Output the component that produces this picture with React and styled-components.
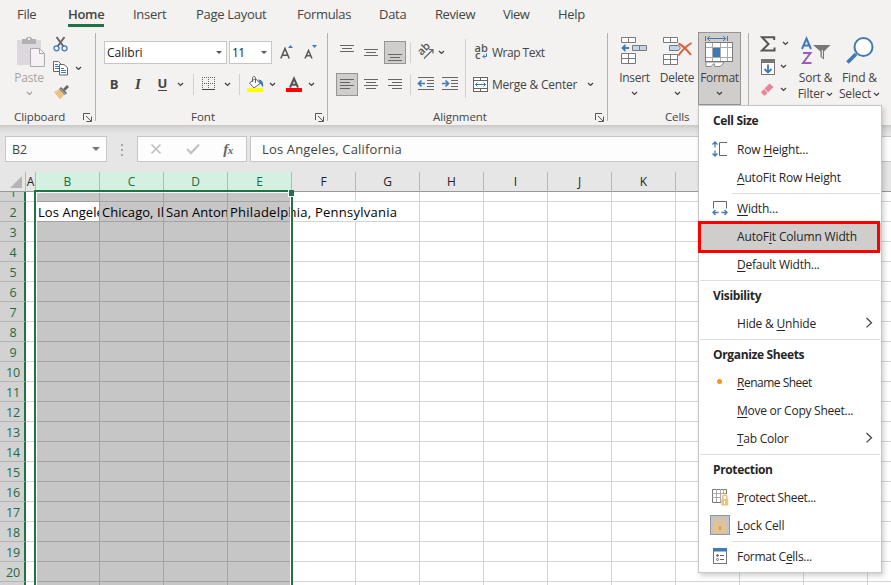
import styled, { createGlobalStyle, css } from "styled-components";

const GlobalStyle = createGlobalStyle`
  * {
    box-sizing: border-box;
  }

  body {
    margin: 0;
    overflow: hidden;
    background: #e6e6e6;
    color: #444;
    font-family: "Open Sans", "Noto Sans", sans-serif;
    font-size: 12px;
  }

  svg {
    display: block;
    flex: none;
    overflow: visible;
  }
`;

const Window = styled.div`
  position: relative;
  display: flex;
  flex-direction: column;
  width: 891px;
  height: 585px;
  overflow: hidden;
`;

/* ---------- tabs ---------- */

const TabBar = styled.nav`
  display: flex;
  height: 30px;
  padding-left: 17px;
  background: #f3f2f1;
`;

const TabItem = styled.div`
  width: ${(props) => props.$w}px;
  font-size: 13px;
  line-height: 29px;
  letter-spacing: ${(props) => props.$ls || -0.3}px;
  white-space: nowrap;
  font-weight: ${(props) => (props.$active ? 600 : 400)};
`;

const TabText = styled.span`
  display: inline-block;
  height: 27px;
  border-bottom: ${(props) => (props.$active ? "3px solid #217346" : "none")};
`;

/* ---------- ribbon ---------- */

const Ribbon = styled.div`
  display: flex;
  height: 95px;
  background: #f3f2f1;
`;

const Group = styled.section`
  display: flex;
  flex-direction: column;
  width: ${(props) => props.$w}px;
  height: 95px;
`;

const GroupBody = styled.div`
  display: flex;
  height: 77px;
  padding-left: ${(props) => props.$pl || 0}px;
`;

const GroupFooter = styled.div`
  display: flex;
  align-items: center;
  height: 18px;
  padding: 2px 3px 0 ${(props) => props.$pl}px;
  line-height: 16px;
  letter-spacing: ${(props) => props.$ls || 0}px;
  font-size: 11.5px;

  svg {
    margin: 0 0 0 auto;
  }
`;

const GroupLine = styled.div`
  width: 1px;
  height: 88px;
  margin-top: 3px;
  background: #b3b1b0;
`;

const Column = styled.div`
  display: flex;
  flex-direction: column;
  width: ${(props) => (props.$w ? `${props.$w}px` : "auto")};
  padding-top: ${(props) => props.$pt}px;
`;

const Row = styled.div`
  display: flex;
  align-items: center;
  height: ${(props) => props.$h}px;
  padding-left: ${(props) => props.$pl || 0}px;
`;

const Slot = styled.div`
  display: flex;
  align-items: center;
  justify-content: center;
  flex: none;
  width: ${(props) => props.$w}px;
  margin-left: ${(props) => props.$ml || 0}px;
`;

const Divider = styled.div`
  flex: none;
  width: 1px;
  height: ${(props) => props.$h || 21}px;
  margin: ${(props) => props.$m || "0"};
  background: #d2d0ce;
`;

const Letter = styled.span`
  color: #444;
  font-size: 13px;
  line-height: 16px;
  font-weight: 700;
  ${(props) =>
    props.$italic &&
    css`
      font-family: "Liberation Serif", serif;
      font-style: italic;
      font-size: 15px;
    `}
  ${(props) =>
    props.$underline &&
    css`
      height: 14px;
      line-height: 13px;
      border-bottom: 1px solid #444;
    `}
`;

const ComboBox = styled.div`
  display: flex;
  align-items: center;
  justify-content: space-between;
  width: ${(props) => props.$w}px;
  height: 23px;
  padding: 0 4px 0 2px;
  margin-right: 2px;
  border: 1px solid #c8c6c4;
  background: #fff;
  color: #222;
  letter-spacing: ${(props) => props.$ls || 0}px;
`;

const AlignButton = styled.div`
  display: flex;
  align-items: center;
  justify-content: center;
  width: 22px;
  height: 23px;
  margin-right: 2px;
  border: 1px solid ${(props) => (props.$on ? "#979593" : "transparent")};
  background: ${(props) => (props.$on ? "#d0cecc" : "transparent")};
`;

const ToolText = styled.span`
  margin-left: ${(props) => props.$ml}px;
  letter-spacing: ${(props) => props.$ls}px;
  white-space: nowrap;
`;

const BigButton = styled.div`
  display: flex;
  flex-direction: column;
  align-items: center;
  width: ${(props) => props.$w}px;
  height: 73px;
  margin-top: 2px;
  padding-top: ${(props) => (props.$on ? 3 : 4)}px;
  border: ${(props) => (props.$on ? "1px solid #979593" : "none")};
  background: ${(props) => (props.$on ? "#d0cecc" : "transparent")};
  color: ${(props) => (props.$off ? "#a6a4a2" : "#444")};
  letter-spacing: ${(props) => props.$ls || 0}px;
`;

const BigIcon = styled.div`
  height: 34px;
`;

const BigText = styled.div`
  display: flex;
  align-items: center;
  gap: 2px;
  height: 16px;
  line-height: 16px;
  white-space: nowrap;
`;

const BigChevron = styled(BigText)`
  height: 15px;
`;

/* ---------- formula bar ---------- */

const FormulaBar = styled.div`
  display: flex;
  height: 47px;
  padding: 11px 0 0 5px;
  background: linear-gradient(#c9c8c7 0, #dcdcdc 4px, #e6e6e6 9px);
`;

const NameBox = styled.div`
  display: flex;
  align-items: center;
  justify-content: space-between;
  width: 102px;
  height: 26px;
  padding: 0 6px;
  border: 1px solid #c6c6c6;
  background: #fdfdfd;
  font-size: 12.5px;
`;

const Dots = styled.div`
  display: flex;
  flex-direction: column;
  align-items: center;
  gap: 3px;
  width: 30px;
  padding-top: 8px;

  i {
    width: 2px;
    height: 2px;
    background: #a6a6a6;
  }
`;

const FormulaTools = styled.div`
  display: flex;
  align-items: center;
  width: 110px;
  height: 26px;
  padding-left: 12px;
  border: 1px solid #c6c6c6;
  background: #fdfdfd;
`;

const FormulaInput = styled.div`
  flex: 1;
  height: 26px;
  margin-left: 3px;
  padding-left: 11px;
  border: 1px solid #c6c6c6;
  border-right: none;
  background: #fdfdfd;
  font-size: 13px;
  line-height: 25px;
  letter-spacing: 0.16px;
`;

/* ---------- sheet ---------- */

const Sheet = styled.div`
  position: relative;
  height: 413px;
  overflow: hidden;
  background: #fff;
`;

const SheetRow = styled.div`
  display: grid;
  grid-template-columns: 26px 10px repeat(14, 64px);
  grid-template-rows: 100%;
  height: ${(props) => props.$h}px;
`;

const Corner = styled.div`
  display: flex;
  justify-content: flex-end;
  align-items: flex-end;
  padding: 0 3px 3px 0;
  border-right: 1px solid #b8b8b8;
  border-bottom: 1px solid #999;
  background: #e6e6e6;
`;

const ColumnHeader = styled.div`
  display: flex;
  justify-content: center;
  border-right: 1px solid #b8b8b8;
  border-bottom: 1px solid #999;
  background: ${(props) => (props.$on ? "#d3f0e0" : "#e6e6e6")};
  color: ${(props) => (props.$on ? "#1e6b44" : "#222")};
  line-height: 20px;
`;

const RowHeader = styled.div`
  display: flex;
  align-items: flex-end;
  justify-content: center;
  overflow: hidden;
  padding-left: 2px;
  border-right: 2px solid #217346;
  border-bottom: 1px solid #b4b4b4;
  background: #d2d2d2;
  color: #1e6b44;
  font-size: 12.5px;
  line-height: 16px;
  letter-spacing: -0.2px;
`;

const Cell = styled.div`
  position: relative;
  z-index: ${(props) => (props.$spill ? 1 : 0)};
  overflow: ${(props) => (props.$spill ? "visible" : "hidden")};
  padding-left: 2px;
  border-right: 1px solid ${(props) => (props.$selected ? "#a3a3a3" : "#d4d4d4")};
  border-bottom: 1px solid ${(props) => (props.$selected ? "#a3a3a3" : "#d4d4d4")};
  background: ${(props) => (props.$selected && !props.$current ? "#c6c6c6" : "#fff")};
  color: #000;
  font-size: 13px;
  line-height: 20px;
  letter-spacing: ${(props) => (props.$spill ? 0.26 : 0.05)}px;
  white-space: nowrap;
  ${(props) => props.$open && "border-right-color: #fff;"}
`;

const Selection = styled.div`
  position: absolute;
  z-index: 2;
  left: 34px;
  top: 18px;
  width: 259px;
  height: 420px;
  border: 2px solid #217346;
  box-shadow: inset 0 0 0 1px #fff;
`;

const Handle = styled.div`
  position: absolute;
  z-index: 2;
  left: 288px;
  top: 18px;
  width: 6px;
  height: 7px;
  border: 1px solid #fff;
  border-width: 0 0 1px 1px;
  background: #217346;
`;

/* ---------- format menu ---------- */

const Menu = styled.div`
  position: absolute;
  z-index: 5;
  left: 698px;
  top: 105px;
  width: 184px;
  height: 468px;
  border: 1px solid #c6c6c6;
  background: #fff;
  box-shadow: 2px 3px 5px rgba(0, 0, 0, 0.18);
  color: #262626;
`;

const MenuTitle = styled.div`
  height: ${(props) => (props.$first ? 30 : 28)}px;
  padding-left: 14px;
  line-height: ${(props) => (props.$first ? 30 : 27)}px;
  font-weight: 700;
  letter-spacing: -0.35px;
`;

const MenuItem = styled.div`
  position: relative;
  display: flex;
  align-items: center;
  height: 28px;
  padding: 0 8px 2px 0;
  background: ${(props) => (props.$on ? "#d0cecc" : "transparent")};
  letter-spacing: ${(props) => props.$ls}px;
  white-space: pre;

  u {
    text-underline-offset: 2px;
    text-decoration-thickness: 1px;
  }
`;

const MenuIcon = styled.div`
  display: flex;
  align-items: center;
  justify-content: center;
  width: 20px;
  height: 20px;
  margin: 0 7px 0 11px;
`;

const LockTile = styled(MenuIcon)`
  border: 1px solid #979593;
  background: #c6c4c2;
`;

const MenuLine = styled.div`
  height: 1px;
  margin: 1px 1px 1px ${(props) => (props.$inset ? 33 : 1)}px;
  background: #e1dfdd;
`;

const SubmenuArrow = styled.div`
  margin-left: auto;
`;

const RedFrame = styled.div`
  position: absolute;
  left: -1px;
  top: -2px;
  width: 182px;
  height: 32px;
  border: 3px solid #fc0000;
`;

/* ---------- icons ---------- */

const Chevron = ({ color = "#444" }) => (
  <svg width="7" height="5" viewBox="0 0 7 5">
    <path d="M1 1l2.5 2.4L6 1" fill="none" stroke={color} strokeWidth="1.3" />
  </svg>
);

const Triangle = ({ size = 6, color = "#555" }) => (
  <svg width={size} height={size / 2} viewBox="0 0 6 3">
    <path d="M0 0h6L3 3z" fill={color} />
  </svg>
);

const Launcher = () => (
  <svg width="9" height="9" viewBox="0 0 9 9" fill="none" stroke="#555">
    <path d="M0.5 7V0.5H7M3 3l5 5M8.5 3.5v5h-5" />
  </svg>
);

const PasteIcon = () => (
  <svg width="34" height="32" viewBox="-4 0 34 32">
    <rect x="1" y="4" width="24" height="25" rx="1" fill="#dcd8dc" />
    <path d="M6 3h4c0-3 6-3 6 0h4v5H6z" fill="#b3b0b3" />
    <rect x="12" y="2" width="2" height="2" fill="#f3f2f1" />
    <path d="M14.5 12.5h9l5 5v13h-14z" fill="#f7f1f7" stroke="#aaa" />
    <path d="M23.5 12.5v5h5" fill="none" stroke="#aaa" />
  </svg>
);

const CutIcon = () => (
  <svg width="16" height="16" viewBox="0 0 16 16" fill="none">
    <path d="M3.5 1l7 9.5M11.5 1l-7 9.5" stroke="#666" strokeWidth="2" />
    <circle cx="3.5" cy="12.3" r="2.5" stroke="#3f7ab5" strokeWidth="1.3" />
    <circle cx="11.5" cy="12.3" r="2.5" stroke="#3f7ab5" strokeWidth="1.3" />
  </svg>
);

const CopyIcon = () => (
  <svg width="16" height="15" viewBox="0 0 16 15" fill="#fff" stroke="#666">
    <path d="M0.5 0.5h5l3 3v7h-8z" />
    <path d="M2 3.5h3M2 5.5h4M2 7.5h4" stroke="#3f7ab5" />
    <path d="M6.5 3.5h4.5l3.5 3v7.5h-8z" />
    <path d="M8 7.5h3M8 9.5h5M8 11.5h5" stroke="#3f7ab5" />
  </svg>
);

const BrushIcon = () => (
  <svg width="17" height="15" viewBox="0 0 17 15">
    <path d="M1 7l6-3 5 5-5 5.5z" fill="#eac282" />
    <path d="M6 4l2-2 6 6-2 2z" fill="#666" />
    <path d="M10 4l4-4 2 2-4 4z" fill="#666" />
    <path d="M7 3.5l6 6" stroke="#f3f2f1" strokeWidth="0.7" />
  </svg>
);

const GrowFontIcon = ({ shrink }) => (
  <svg width="15" height="17" viewBox="0 0 15 17">
    <path
      d={shrink ? "M1 14.5L4.5 6.5 8 14.5M2.2 11.8h4.6" : "M0.8 14.5L5 4.5l4.2 10M2.3 11.3h5.4"}
      fill="none"
      stroke="#555"
      strokeWidth="1.5"
    />
    <path d={shrink ? "M8 1h5l-2.5 3z" : "M8 4h5l-2.5-3z"} fill="#3f7ab5" />
  </svg>
);

const BordersIcon = () => (
  <svg width="14" height="14" viewBox="0 0 14 14" stroke="#666">
    <path
      d="M0 0.5h13M0 6.5h13M0.5 0v12M6.5 0v12M12.5 0v12"
      strokeDasharray="1 1"
      fill="none"
    />
    <path d="M0 12.5h13" stroke="#444" />
  </svg>
);

const FillColorIcon = () => (
  <svg width="17" height="17" viewBox="0 0 17 17">
    <path d="M2.5 7l6-4.5 4.5 5L7 12z" fill="#fff" stroke="#666" />
    <path d="M5.5 6V2c0-2 3-2 3 0v5" fill="none" stroke="#666" />
    <path d="M11 3.5c4 0 6 3 5 8-1-2-2-3-3-4z" fill="#3f7ab5" />
    <rect y="12" width="16" height="4" fill="#ff0" />
  </svg>
);

const FontColorIcon = () => (
  <svg width="16" height="17" viewBox="0 0 16 17">
    <path d="M4 11.5L8 2.5l4 9M5.3 8.8h5.4" fill="none" stroke="#555" strokeWidth="2" />
    <rect y="12" width="16" height="4" fill="red" />
  </svg>
);

const verticalOffset = { top: 3, middle: 7, bottom: 12 };

const VAlignIcon = ({ at }) => {
  const y = verticalOffset[at] + 0.5;
  return (
    <svg width="14" height="19" viewBox="0 0 14 19" stroke="#666">
      <path d={`M0 ${y - 1}h14M2 ${y + 2}h10M0 ${y + 5}h14`} />
    </svg>
  );
};

const HAlignIcon = ({ side }) => {
  const x = { left: 0, center: 2, right: 4 }[side];
  return (
    <svg width="14" height="11" viewBox="0 0 14 11" stroke="#666">
      <path d={`M0 0.5h14M${x} 3.5h10M0 6.5h14M${x} 9.5h10`} />
    </svg>
  );
};

const IconText = styled.text`
  font: 600 11px "Open Sans", sans-serif;
  fill: #555;
`;

const OrientationIcon = () => (
  <svg width="16" height="16" viewBox="0 0 16 16">
    <IconText transform="translate(3.5 12) rotate(-45)">ab</IconText>
    <path d="M6 14.5l9-9M11 5.5h4v4" fill="none" stroke="#666" strokeWidth="1.2" />
  </svg>
);

const IndentIcon = ({ right }) => (
  <svg width="16" height="14" viewBox="0 0 16 14" fill="none">
    <path d="M0 0.5h16M9 3.5h7M9 6.5h7M9 9.5h7M0 12.5h16" stroke="#666" />
    <path
      d={right ? "M0 6.5h6M3.5 3.5l3 3-3 3" : "M1 6.5h6M3.5 3.5l-3 3 3 3"}
      stroke="#3f7ab5"
      strokeWidth="1.7"
    />
  </svg>
);

const WrapIcon = () => (
  <svg width="13" height="16" viewBox="0 0 13 16">
    <IconText x="-0.5" y="8">ab</IconText>
    <IconText x="0" y="15">c</IconText>
    <path d="M11.5 9.5v3H8M9.8 10.5L7.8 12.5l2 2" fill="none" stroke="#3f7ab5" />
  </svg>
);

const MergeIcon = () => (
  <svg width="15" height="15" viewBox="0 0 15 15" fill="none" stroke="#666">
    <rect x="0.5" y="0.5" width="14" height="14" fill="#fff" />
    <path d="M0 3.5h15M0 11.5h15M7.5 0v3M7.5 12v3" />
    <path d="M2 7.5h11M4.5 5.5l-2 2 2 2M10.5 5.5l2 2-2 2" stroke="#3f7ab5" />
  </svg>
);

const InsertCellsIcon = () => (
  <svg width="27" height="28" viewBox="0 0 27 28" fill="#fff" stroke="#7a7a7a">
    <path d="M0.5 1.5h14v5h-14zM7.5 1.5v5" />
    <path d="M0.5 17.5h14v10h-14zM7.5 17.5v10M0.5 22.5h14" />
    <path d="M11.5 9.5h14v5h-14zM18.5 9.5v5" fill="#c0d4ea" />
    <path d="M1.5 12h6.5M4.5 9l-3 3 3 3" fill="none" stroke="#3f7ab5" strokeWidth="1.8" />
  </svg>
);

const DeleteCellsIcon = () => (
  <svg width="29" height="29" viewBox="0 0 29 29" fill="#fff" stroke="#7a7a7a">
    <path d="M0.5 1.5h14v5h-14zM7.5 1.5v5" />
    <path d="M0.5 18.5h14v10h-14zM7.5 18.5v10M0.5 23.5h14" />
    <path d="M6.5 9.5h9l2 2.5-2 2.5h-9z" fill="#c0d4ea" />
    <path
      d="M15.5 7.5c5 2.5 9 7 12.5 11.5M28.5 7c-5 3-9.5 7-13 12.5"
      fill="none"
      stroke="#db5f3c"
      strokeWidth="2"
    />
  </svg>
);

const FormatCellsIcon = () => (
  <svg width="29" height="32" viewBox="0 0 29 32" fill="none" stroke="#7a7a7a">
    <path d="M1 26v4.5h5l3-3 1 3h5l3-2.5 1-2z" fill="#fff" stroke="#888" />
    <rect x="0.5" y="6.5" width="27" height="19" fill="#fff" />
    <path d="M1 11.5h26M1 21.5h26M7.5 7v18M15.5 7v18M22.5 7v18" stroke="#aaa" />
    <rect x="8" y="12" width="7" height="9" fill="#3f7ab5" stroke="none" />
    <path d="M0.5 0v5M22.5 0v5M2 2.5h19M5 0L2.2 2.5 5 5M18 0l2.8 2.5L18 5" stroke="#3f7ab5" />
  </svg>
);

const SigmaIcon = () => (
  <svg width="16" height="16" viewBox="0 0 16 16">
    <path d="M14.2 4V1.2H2L8.5 8 2 14.5h12.5V11.5" fill="none" stroke="#555" strokeWidth="2" />
  </svg>
);

const FillDownIcon = () => (
  <svg width="15" height="16" viewBox="0 0 15 16" fill="none">
    <rect x="0.5" y="0.5" width="13" height="15" fill="#fff" stroke="#777" />
    <rect width="14" height="4" fill="#777" />
    <path d="M7 5.5v8M3.5 10L7 13.5 10.5 10" stroke="#3f7ab5" strokeWidth="1.8" />
  </svg>
);

const EraserIcon = () => (
  <svg width="14" height="13" viewBox="0 0 14 13">
    <path d="M8.5 0.5L12.5 4 7 9.5 3.5 5.5z" fill="#e8849a" />
    <path d="M3 6l3.5 4L4 12.5H3L0.5 10V8.5z" fill="#e8849a" />
  </svg>
);

const SortIcon = () => (
  <svg width="31" height="29" viewBox="-1 0 31 29" fill="none">
    <path d="M1 13L5.5 2.5 10 13M2.5 9.5h6" stroke="#3f7ab5" strokeWidth="2" />
    <path d="M2 17h7.5L2 27h8.5" stroke="#9a5fb5" strokeWidth="2" />
    <path d="M12 9h17.5L23 15.5v8L19.5 21v-5.5z" fill="#777" />
    <path d="M20.8 14v7l1 .8V14z" fill="#fff" />
  </svg>
);

const FindIcon = () => (
  <svg width="28" height="29" viewBox="0 0 28 29">
    <path d="M1.5 26.5L10 18" stroke="#3f7ab5" strokeWidth="3.8" />
    <circle cx="17.5" cy="11" r="9" fill="#fff" stroke="#3f7ab5" strokeWidth="2" />
  </svg>
);

const FxText = styled.span`
  font: italic 700 15px "Liberation Serif", serif;
  letter-spacing: -0.5px;
  color: #666;

  small {
    font-size: 11px;
  }
`;

const RowHeightIcon = () => (
  <svg width="16" height="16" viewBox="0 0 16 16" fill="none">
    <path
      d="M3 1v5.5M3 9.5V15M0.5 3.5L3 1l2.5 2.5M0.5 12.5L3 15l2.5-2.5"
      stroke="#3f7ab5"
      strokeWidth="1.3"
    />
    <path d="M15 1.5H7.5v13H15" stroke="#666" />
  </svg>
);

const WidthIcon = () => (
  <svg width="16" height="16" viewBox="0 0 16 16" fill="none">
    <path d="M1.5 8.5v-7h13v7" stroke="#666" />
    <path
      d="M1 12.5h5.5M9.5 12.5H15M3.5 10L1 12.5 3.5 15M12.5 10l2.5 2.5-2.5 2.5"
      stroke="#3f7ab5"
      strokeWidth="1.3"
    />
  </svg>
);

const DotIcon = () => (
  <svg width="6" height="6" viewBox="0 0 6 6">
    <circle cx="2.5" cy="2.5" r="2.5" fill="#fb9410" />
  </svg>
);

const ProtectIcon = () => (
  <svg width="17" height="17" viewBox="0 0 17 17" fill="none">
    <path d="M0.5 0.5h14v13h-14z" fill="#fff" stroke="#777" />
    <path d="M0 4.5h14M0 8.5h14M4.5 0v13M8.5 0v13M11.5 0v13" stroke="#aaa" />
    <rect x="9" y="5" width="8" height="12" fill="#fff" />
    <path d="M10.8 10V8c0-2.6 4-2.6 4 0v2" stroke="#eac282" strokeWidth="1.5" />
    <rect x="9.3" y="10" width="7" height="6.5" fill="#eac282" />
    <path d="M12.5 12v3" stroke="#fff" />
  </svg>
);

const LockIcon = () => (
  <svg width="12" height="15" viewBox="0 0 12 15" fill="none">
    <path d="M2.5 7V4.5c0-4.5 7-4.5 7 0V7" stroke="#eac282" strokeWidth="2" />
    <rect y="6" width="12" height="8.5" fill="#eac282" />
    <path d="M6 8.5v3.5" stroke="#999" strokeWidth="1.5" />
  </svg>
);

const FormatDialogIcon = () => (
  <svg width="15" height="16" viewBox="0 0 15 16" fill="none">
    <rect x="0.5" y="0.5" width="13" height="15" fill="#fff" stroke="#777" />
    <rect width="14" height="3.5" fill="#3f7ab5" />
    <path d="M7 7.5h4M7 11.5h4" stroke="#666" />
    <circle cx="4.5" cy="7.5" r="1" fill="#666" stroke="#666" strokeWidth="0.7" />
    <circle cx="4.5" cy="11.5" r="1" stroke="#666" />
  </svg>
);

const ArrowRight = () => (
  <svg width="8" height="12" viewBox="0 0 8 12">
    <path d="M1.5 1l5 4.7-5 4.7" fill="none" stroke="#444" strokeWidth="1.3" />
  </svg>
);

/* ---------- data ---------- */

const tabs = [
  { name: "File", w: 51 },
  { name: "Home", w: 65, active: true },
  { name: "Insert", w: 63 },
  { name: "Page Layout", w: 101 },
  { name: "Formulas", w: 82 },
  { name: "Data", w: 56 },
  { name: "Review", w: 68, ls: -0.4 },
  { name: "View", w: 55, ls: -0.5 },
  { name: "Help", w: 60 },
];

// the columns after K stay unlabelled under the open menu
const columns = [..."ABCDEFGHIJK", "", "", "", ""];
const rows = Array.from({ length: 21 }, (_, i) => i + 1);
const selected = ["B", "C", "D", "E"];

const cities = {
  B: "Los Angeles, California",
  C: "Chicago, Illinois",
  D: "San Antonio, Texas",
  E: "Philadelphia, Pennsylvania",
};

// "_" stands before the access key letter
const menu = [
  { title: "Cell Size", first: true },
  { text: "Row _Height...", icon: <RowHeightIcon />, ls: -0.15 },
  { text: "_AutoFit Row Height", ls: -0.17 },
  { line: true, inset: true },
  { text: "_Width...", icon: <WidthIcon /> },
  { text: "AutoF_it Column Width", on: true, ls: -0.15 },
  { text: "_Default Width...", ls: -0.25 },
  { line: true },
  { title: "Visibility" },
  { text: "Hide & _Unhide", submenu: true },
  { line: true },
  { title: "Organize Sheets" },
  { text: "_Rename Sheet", icon: <DotIcon />, ls: -0.5 },
  { text: "_Move or Copy Sheet...", ls: -0.25 },
  { text: "_Tab Color", submenu: true, ls: -0.25 },
  { line: true },
  { title: "Protection" },
  { text: "_Protect Sheet...", icon: <ProtectIcon />, ls: -0.36 },
  { text: "_Lock Cell", icon: <LockIcon />, tile: true },
  { line: true, inset: true },
  { text: "Format C_ells...", icon: <FormatDialogIcon />, ls: -0.27 },
];

const AccessText = ({ text }) => {
  const [before, after] = text.split("_");
  return (
    <span>
      {before}
      <u>{after[0]}</u>
      {after.slice(1)}
    </span>
  );
};

const FormatMenu = () => (
  <Menu>
    {menu.map((item, i) => {
      if (item.line) return <MenuLine key={i} $inset={item.inset} />;
      if (item.title) {
        return (
          <MenuTitle key={i} $first={item.first}>
            {item.title}
          </MenuTitle>
        );
      }
      const IconBox = item.tile ? LockTile : MenuIcon;
      return (
        <MenuItem key={i} $on={item.on} $ls={item.ls ?? -0.2}>
          <IconBox>{item.icon}</IconBox>
          <AccessText text={item.text} />
          {item.submenu && (
            <SubmenuArrow>
              <ArrowRight />
            </SubmenuArrow>
          )}
          {item.on && <RedFrame />}
        </MenuItem>
      );
    })}
  </Menu>
);

const ClipboardGroup = () => (
  <Group $w={95}>
    <GroupBody $pl={6}>
      <BigButton $w={46} $off $ls={-0.2}>
        <BigIcon>
          <PasteIcon />
        </BigIcon>
        <BigText>Paste</BigText>
        <BigChevron>
          <Chevron color="#a6a4a2" />
        </BigChevron>
      </BigButton>
      <Column $pt={2}>
        <Row $h={24} $pl={1}>
          <CutIcon />
        </Row>
        <Row $h={24} $pl={1}>
          <CopyIcon />
          <Slot $w={18}>
            <Chevron />
          </Slot>
        </Row>
        <Row $h={24} $pl={1}>
          <BrushIcon />
        </Row>
      </Column>
    </GroupBody>
    <GroupFooter $pl={14} $ls={-0.1}>
      Clipboard
      <Launcher />
    </GroupFooter>
  </Group>
);

const FontGroup = () => (
  <Group $w={231}>
    <GroupBody>
      <Column $pt={6}>
        <Row $h={32} $pl={8}>
          <ComboBox $w={123}>
            Calibri
            <Triangle />
          </ComboBox>
          <ComboBox $w={43} $ls={-0.5}>
            11
            <Triangle />
          </ComboBox>
          <Slot $w={15} $ml={6}>
            <GrowFontIcon />
          </Slot>
          <Slot $w={15} $ml={9}>
            <GrowFontIcon shrink />
          </Slot>
        </Row>
        <Row $h={32} $pl={6}>
          <Slot $w={24}>
            <Letter>B</Letter>
          </Slot>
          <Slot $w={24}>
            <Letter $italic>I</Letter>
          </Slot>
          <Slot $w={25}>
            <Letter $underline>U</Letter>
          </Slot>
          <Slot $w={10}>
            <Chevron />
          </Slot>
          <Divider $m="0 8px" />
          <BordersIcon />
          <Slot $w={22}>
            <Chevron />
          </Slot>
          <Divider $m="0 7px 0 1px" />
          <FillColorIcon />
          <Slot $w={16}>
            <Chevron />
          </Slot>
          <Slot $w={16} $ml={6}>
            <FontColorIcon />
          </Slot>
          <Slot $w={18}>
            <Chevron />
          </Slot>
        </Row>
      </Column>
    </GroupBody>
    <GroupFooter $pl={95}>
      Font
      <Launcher />
    </GroupFooter>
  </Group>
);

const AlignmentGroup = () => (
  <Group $w={279}>
    <GroupBody $pl={8}>
      <Column $w={129} $pt={6}>
        <Row $h={32}>
          <AlignButton>
            <VAlignIcon at="top" />
          </AlignButton>
          <AlignButton>
            <VAlignIcon at="middle" />
          </AlignButton>
          <AlignButton $on>
            <VAlignIcon at="bottom" />
          </AlignButton>
          <Divider $m="0 7px 0 2px" />
          <OrientationIcon />
          <Slot $w={14}>
            <Chevron />
          </Slot>
        </Row>
        <Row $h={32}>
          <AlignButton $on>
            <HAlignIcon side="left" />
          </AlignButton>
          <AlignButton>
            <HAlignIcon side="center" />
          </AlignButton>
          <AlignButton>
            <HAlignIcon side="right" />
          </AlignButton>
          <Divider $m="0 7px 0 2px" />
          <IndentIcon />
          <Slot $w={16} $ml={8}>
            <IndentIcon right />
          </Slot>
        </Row>
      </Column>
      <Divider $h={59} $m="9px 0 0" />
      <Column $pt={6}>
        <Row $h={32} $pl={9}>
          <WrapIcon />
          <ToolText $ml={4} $ls={-0.5}>
            Wrap Text
          </ToolText>
        </Row>
        <Row $h={32} $pl={7}>
          <MergeIcon />
          <ToolText $ml={4} $ls={-0.22}>
            Merge &amp; Center
          </ToolText>
          <Slot $w={26}>
            <Chevron />
          </Slot>
        </Row>
      </Column>
    </GroupBody>
    <GroupFooter $pl={105} $ls={-0.1}>
      Alignment
      <Launcher />
    </GroupFooter>
  </Group>
);

const CellsGroup = () => (
  <Group $w={140}>
    <GroupBody $pl={5}>
      <BigButton $w={43} $ls={-0.3}>
        <BigIcon>
          <InsertCellsIcon />
        </BigIcon>
        <BigText>Insert</BigText>
        <BigChevron>
          <Chevron />
        </BigChevron>
      </BigButton>
      <BigButton $w={42} $ls={-0.3}>
        <BigIcon>
          <DeleteCellsIcon />
        </BigIcon>
        <BigText>Delete</BigText>
        <BigChevron>
          <Chevron />
        </BigChevron>
      </BigButton>
      <BigButton $w={43} $on $ls={-0.3}>
        <BigIcon>
          <FormatCellsIcon />
        </BigIcon>
        <BigText>Format</BigText>
        <BigChevron>
          <Chevron />
        </BigChevron>
      </BigButton>
    </GroupBody>
    <GroupFooter $pl={57} $ls={-0.15}>
      Cells
    </GroupFooter>
  </Group>
);

const EditingGroup = () => (
  <Group $w={142}>
    <GroupBody $pl={11}>
      <Column $w={34} $pt={2}>
        <Row $h={23}>
          <SigmaIcon />
          <Slot $w={19}>
            <Chevron />
          </Slot>
        </Row>
        <Row $h={23} $pl={1}>
          <FillDownIcon />
          <Slot $w={15}>
            <Chevron />
          </Slot>
        </Row>
        <Row $h={23} $pl={1}>
          <EraserIcon />
          <Slot $w={17}>
            <Chevron />
          </Slot>
        </Row>
      </Column>
      <BigButton $w={43} $ls={-0.25}>
        <BigIcon>
          <SortIcon />
        </BigIcon>
        <BigText>Sort &amp;</BigText>
        <BigText>
          Filter <Chevron />
        </BigText>
      </BigButton>
      <BigButton $w={45} $ls={-0.15}>
        <BigIcon>
          <FindIcon />
        </BigIcon>
        <BigText>Find &amp;</BigText>
        <BigText>
          Select <Chevron />
        </BigText>
      </BigButton>
    </GroupBody>
  </Group>
);

const App = () => (
  <Window>
    <GlobalStyle />
    <TabBar>
      {tabs.map((tab) => (
        <TabItem key={tab.name} $w={tab.w} $active={tab.active} $ls={tab.ls}>
          <TabText $active={tab.active}>{tab.name}</TabText>
        </TabItem>
      ))}
    </TabBar>
    <Ribbon>
      <ClipboardGroup />
      <GroupLine />
      <FontGroup />
      <GroupLine />
      <AlignmentGroup />
      <GroupLine />
      <CellsGroup />
      <GroupLine />
      <EditingGroup />
    </Ribbon>
    <FormulaBar>
      <NameBox>
        B2
        <Triangle size={8} color="#777" />
      </NameBox>
      <Dots>
        <i />
        <i />
        <i />
      </Dots>
      <FormulaTools>
        <svg width="12" height="12" viewBox="0 0 12 12">
          <path d="M1.5 1.5l9 9M10.5 1.5l-9 9" stroke="#c0c0c0" strokeWidth="1.7" />
        </svg>
        <Slot $w={14} $ml={24}>
          <svg width="14" height="12" viewBox="0 0 14 12">
            <path d="M1 6l4 4L13 1.5" fill="none" stroke="#c4c4c4" strokeWidth="2.3" />
          </svg>
        </Slot>
        <Slot $w={14} $ml={21}>
          <FxText>
            f<small>x</small>
          </FxText>
        </Slot>
      </FormulaTools>
      <FormulaInput>{cities.B}</FormulaInput>
    </FormulaBar>
    <Sheet>
      <SheetRow $h={20}>
        <Corner>
          <svg width="12" height="12" viewBox="0 0 12 12">
            <path d="M12 0v12H0z" fill="#b4b4b4" />
          </svg>
        </Corner>
        {columns.map((name, i) => (
          <ColumnHeader key={i} $on={selected.includes(name)}>
            {name}
          </ColumnHeader>
        ))}
      </SheetRow>
      {rows.map((n) => (
        <SheetRow key={n} $h={n === 1 ? 10 : 20}>
          <RowHeader>{n}</RowHeader>
          {columns.map((name, i) => (
            <Cell
              key={i}
              $selected={selected.includes(name)}
              $current={n === 2 && name === "B"}
              $spill={n === 2 && name === "E"}
              $open={n === 2 && name === "F"}
            >
              {n === 2 && cities[name]}
            </Cell>
          ))}
        </SheetRow>
      ))}
      <Selection />
      <Handle />
    </Sheet>
    <FormatMenu />
  </Window>
);

export default App;
